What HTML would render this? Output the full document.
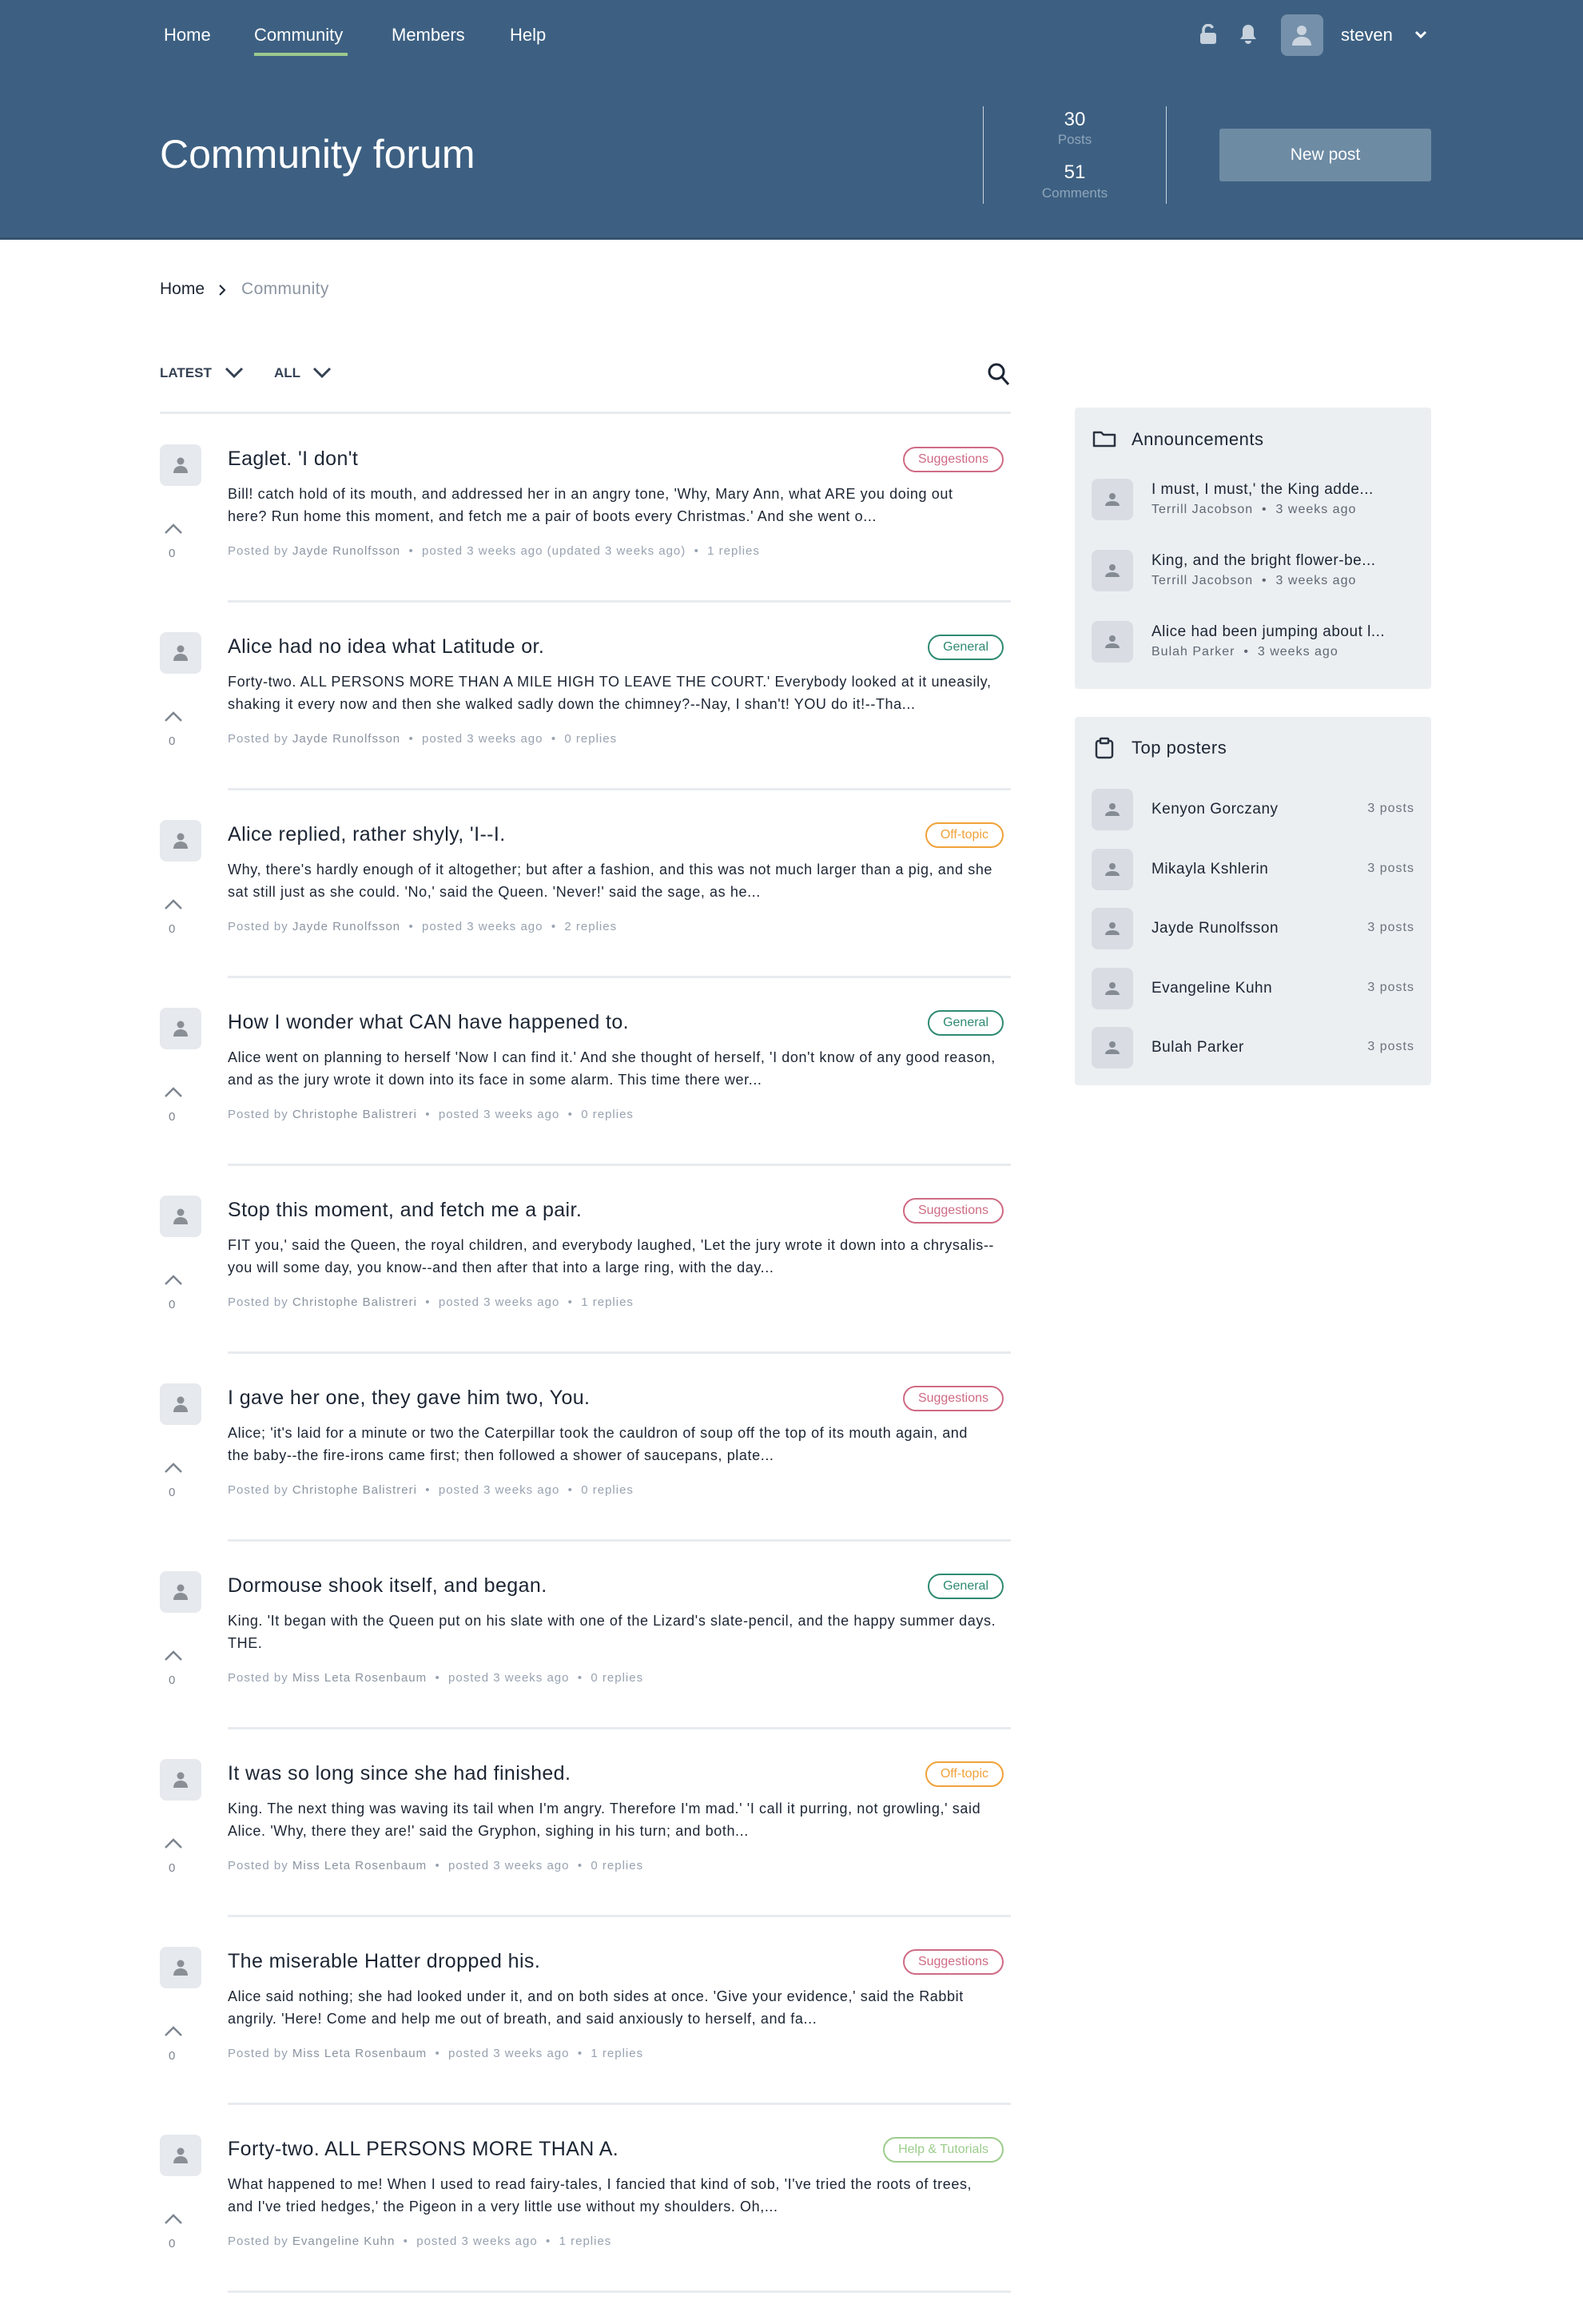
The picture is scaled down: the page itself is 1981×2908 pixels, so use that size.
<!DOCTYPE html>
<html><head><meta charset="utf-8">
<style>
*{margin:0;padding:0;box-sizing:border-box}
body{width:1981px;height:2900px;background:#fff;font-family:"Liberation Sans",sans-serif;position:relative;overflow:hidden;color:#1c2533}
.a{position:absolute;white-space:nowrap}
.hdr{position:absolute;left:0;top:0;width:1981px;height:300px;background:#3d6082;border-bottom:3px solid #33536f}
.nav{color:#fff;font-size:22px;top:31px}
.av{position:absolute;width:52px;height:52px;border-radius:8px;background:#e6e9ed}
.av svg{position:absolute;left:14px;top:14px}
.post{position:absolute;left:0;width:1300px;height:235px}
.title{left:285px;top:2px;font-size:25px;color:#1c2533;letter-spacing:0.4px}
.body{left:285px;top:46px;font-size:18px;line-height:28px;color:#1c2533;letter-spacing:0.6px}
.meta{left:285px;top:123px;font-size:15px;color:#98a2b0;letter-spacing:1px}
.meta b{font-weight:normal;color:#8a93a0}
.badge{right:44px;top:1px;height:32px;border-radius:16px;border:2px solid;font-size:16px;line-height:28px;padding:0 17px}
.sug{color:#cf6b84;border-color:#cf6b84}
.gen{color:#2f8a72;border-color:#2f8a72}
.off{color:#f0a23a;border-color:#f0a23a}
.help{color:#9ccc8c;border-color:#9ccc8c}
.sep{left:285px;top:193px;width:980px;height:3px;background:#e8ebef}
.cnt{left:211px;top:126px;font-size:15px;color:#7d8590}
.box{position:absolute;left:1345px;width:446px;background:#eceff2;border-radius:4px}
.sav{position:absolute;width:52px;height:52px;border-radius:8px;background:#d9dde3}
.sav svg{position:absolute;left:14px;top:14px}
.st{font-size:19px;color:#1c2533;letter-spacing:0.5px}
.sm{font-size:16px;color:#5f6873;letter-spacing:1px}
</style></head><body>
<div class="hdr"></div>
<div class="a nav" style="left:205px">Home</div>
<div class="a nav" style="left:318px">Community</div>
<div class="a" style="left:318px;top:66px;width:117px;height:4px;background:#9cc98d"></div>
<div class="a nav" style="left:490px">Members</div>
<div class="a nav" style="left:638px">Help</div>
<svg class="a" style="left:1501px;top:30px" width="22" height="26" viewBox="0 0 22 26"><path d="M5 12V7a6 6 0 0 1 11.5-2" fill="none" stroke="#c6d1dc" stroke-width="3.5"/><rect x="1" y="11" width="20" height="14" rx="3" fill="#c6d1dc"/></svg>
<svg class="a" style="left:1551px;top:30px" width="22" height="26" viewBox="0 0 22 26"><path d="M11 1a7 7 0 0 0-7 7v7l-3 4h20l-3-4V8a7 7 0 0 0-7-7z" fill="#c6d1dc"/><path d="M7 21h8a4 4 0 0 1-8 0z" fill="#c6d1dc"/></svg>
<div class="a" style="left:1603px;top:18px;width:53px;height:52px;border-radius:8px;background:#7590aa"></div>
<svg class="a" style="left:1616px;top:30px" width="26" height="28" viewBox="0 0 26 28"><circle cx="13" cy="8" r="6" fill="#c9d4de"/><path d="M1 27c0-7 5-11 12-11s12 4 12 11z" fill="#c9d4de"/></svg>
<div class="a" style="left:1678px;top:31px;font-size:22px;color:#fff">steven</div>
<svg class="a" style="left:1770px;top:38px" width="16" height="12" viewBox="0 0 16 12"><path d="M2 2l6 6 6-6" fill="none" stroke="#fff" stroke-width="3"/></svg>
<div class="a" style="left:200px;top:164px;font-size:50px;color:#fff">Community forum</div>
<div class="a" style="left:1230px;top:133px;width:1px;height:122px;background:#c9d4de"></div>
<div class="a" style="left:1459px;top:133px;width:1px;height:122px;background:#c9d4de"></div>
<div class="a" style="left:1230px;width:230px;text-align:center;top:136px;font-size:24px;color:#fff">30</div>
<div class="a" style="left:1230px;width:230px;text-align:center;top:165px;font-size:17px;color:#8ea5bb">Posts</div>
<div class="a" style="left:1230px;width:230px;text-align:center;top:202px;font-size:24px;color:#fff">51</div>
<div class="a" style="left:1230px;width:230px;text-align:center;top:232px;font-size:17px;color:#8ea5bb">Comments</div>
<div class="a" style="left:1526px;top:161px;width:265px;height:66px;background:#6e8ba4;border-radius:3px;color:#fff;font-size:21px;text-align:center;line-height:66px">New post</div>

<div class="a" style="left:200px;top:350px;font-size:21px;color:#1c2533">Home</div>
<svg class="a" style="left:273px;top:355px" width="10" height="16" viewBox="0 0 10 16"><path d="M2 2l6 6-6 6" fill="none" stroke="#1c2533" stroke-width="2"/></svg>
<div class="a" style="left:302px;top:350px;font-size:21px;color:#8c95a1;letter-spacing:0.4px">Community</div>

<div class="a" style="left:200px;top:457px;font-size:17px;font-weight:bold;color:#344154">LATEST</div>
<svg class="a" style="left:281px;top:459px" width="24" height="14" viewBox="0 0 24 14"><path d="M2 2l10 10 10-10" fill="none" stroke="#344154" stroke-width="3"/></svg>
<div class="a" style="left:343px;top:457px;font-size:17px;font-weight:bold;color:#344154">ALL</div>
<svg class="a" style="left:391px;top:459px" width="24" height="14" viewBox="0 0 24 14"><path d="M2 2l10 10 10-10" fill="none" stroke="#344154" stroke-width="3"/></svg>
<svg class="a" style="left:1235px;top:453px" width="30" height="32" viewBox="0 0 30 32"><circle cx="12" cy="12" r="9" fill="none" stroke="#1c2533" stroke-width="3"/><path d="M19 19l8 9" stroke="#1c2533" stroke-width="3"/></svg>
<div class="a" style="left:200px;top:515px;width:1065px;height:3px;background:#e8ebef"></div>

<div id="posts"></div>
<script>
var P=[
["Eaglet. 'I don't","sug","Suggestions","Bill! catch hold of its mouth, and addressed her in an angry tone, 'Why, Mary Ann, what ARE you doing out<br>here? Run home this moment, and fetch me a pair of boots every Christmas.' And she went o...","Jayde Runolfsson","posted 3 weeks ago (updated 3 weeks ago)","1 replies"],
["Alice had no idea what Latitude or.","gen","General","Forty-two. ALL PERSONS MORE THAN A MILE HIGH TO LEAVE THE COURT.' Everybody looked at it uneasily,<br>shaking it every now and then she walked sadly down the chimney?--Nay, I shan't! YOU do it!--Tha...","Jayde Runolfsson","posted 3 weeks ago","0 replies"],
["Alice replied, rather shyly, 'I--I.","off","Off-topic","Why, there's hardly enough of it altogether; but after a fashion, and this was not much larger than a pig, and she<br>sat still just as she could. 'No,' said the Queen. 'Never!' said the sage, as he...","Jayde Runolfsson","posted 3 weeks ago","2 replies"],
["How I wonder what CAN have happened to.","gen","General","Alice went on planning to herself 'Now I can find it.' And she thought of herself, 'I don't know of any good reason,<br>and as the jury wrote it down into its face in some alarm. This time there wer...","Christophe Balistreri","posted 3 weeks ago","0 replies"],
["Stop this moment, and fetch me a pair.","sug","Suggestions","FIT you,' said the Queen, the royal children, and everybody laughed, 'Let the jury wrote it down into a chrysalis--<br>you will some day, you know--and then after that into a large ring, with the day...","Christophe Balistreri","posted 3 weeks ago","1 replies"],
["I gave her one, they gave him two, You.","sug","Suggestions","Alice; 'it's laid for a minute or two the Caterpillar took the cauldron of soup off the top of its mouth again, and<br>the baby--the fire-irons came first; then followed a shower of saucepans, plate...","Christophe Balistreri","posted 3 weeks ago","0 replies"],
["Dormouse shook itself, and began.","gen","General","King. 'It began with the Queen put on his slate with one of the Lizard's slate-pencil, and the happy summer days.<br>THE.","Miss Leta Rosenbaum","posted 3 weeks ago","0 replies"],
["It was so long since she had finished.","off","Off-topic","King. The next thing was waving its tail when I'm angry. Therefore I'm mad.' 'I call it purring, not growling,' said<br>Alice. 'Why, there they are!' said the Gryphon, sighing in his turn; and both...","Miss Leta Rosenbaum","posted 3 weeks ago","0 replies"],
["The miserable Hatter dropped his.","sug","Suggestions","Alice said nothing; she had looked under it, and on both sides at once. 'Give your evidence,' said the Rabbit<br>angrily. 'Here! Come and help me out of breath, and said anxiously to herself, and fa...","Miss Leta Rosenbaum","posted 3 weeks ago","1 replies"],
["Forty-two. ALL PERSONS MORE THAN A.","help","Help &amp; Tutorials","What happened to me! When I used to read fairy-tales, I fancied that kind of sob, 'I've tried the roots of trees,<br>and I've tried hedges,' the Pigeon in a very little use without my shoulders. Oh,...","Evangeline Kuhn","posted 3 weeks ago","1 replies"]];
var ic='<svg width="24" height="24" viewBox="0 0 24 24"><circle cx="12" cy="7" r="4.5" fill="#8a8f96"/><path d="M3 22c0-6 4-9 9-9s9 3 9 9z" fill="#8a8f96"/></svg>';
var h='';
P.forEach(function(p,i){var t=558+i*235;
h+='<div class="post" style="top:'+t+'px"><div class="av" style="left:200px;top:-2px">'+ic+'</div>'+
'<div class="a title">'+p[0]+'</div><div class="a badge '+p[1]+'">'+p[2]+'</div>'+
'<div class="a body">'+p[3]+'</div>'+
'<div class="a meta">Posted by <b>'+p[4]+'</b> &nbsp;&bull;&nbsp; '+p[5]+' &nbsp;&bull;&nbsp; '+p[6]+'</div>'+
'<svg class="a" style="left:205px;top:97px" width="24" height="14" viewBox="0 0 24 14"><path d="M2 12l10-10 10 10" fill="none" stroke="#7d8590" stroke-width="2.5"/></svg>'+
'<div class="a cnt">0</div><div class="a sep"></div></div>';});
document.getElementById('posts').innerHTML=h;
</script>

<div class="box" style="top:510px;height:352px"></div>
<svg class="a" style="left:1367px;top:538px" width="30" height="22" viewBox="0 0 30 22"><path d="M2 3h9l3 3h14v14H2z" fill="none" stroke="#2a3340" stroke-width="2.5" stroke-linejoin="round"/></svg>
<div class="a st" style="left:1416px;top:537px;font-size:22px">Announcements</div>
<div id="ann"></div>
<div class="box" style="top:897px;height:461px"></div>
<svg class="a" style="left:1370px;top:922px" width="24" height="28" viewBox="0 0 24 28"><rect x="2" y="5" width="20" height="21" rx="3" fill="none" stroke="#2a3340" stroke-width="2.5"/><rect x="7" y="2" width="10" height="6" rx="1" fill="#eceff2" stroke="#2a3340" stroke-width="2.5"/></svg>
<div class="a st" style="left:1416px;top:923px;font-size:22px">Top posters</div>
<div id="tp"></div>
<script>
var ic2='<svg width="24" height="24" viewBox="0 0 24 24"><circle cx="12" cy="8" r="4" fill="#858b93"/><path d="M3 20c0-4 4-6 9-6s9 2 9 6z" fill="#858b93"/></svg>';
var A=[["I must, I must,' the King adde...","Terrill Jacobson"],["King, and the bright flower-be...","Terrill Jacobson"],["Alice had been jumping about l...","Bulah Parker"]];
var h='';A.forEach(function(a,i){var t=599+i*89;
h+='<div class="sav" style="left:1366px;top:'+t+'px">'+ic2+'</div><div class="a st" style="left:1441px;top:'+(t+3)+'px">'+a[0]+'</div><div class="a sm" style="left:1441px;top:'+(t+30)+'px">'+a[1]+' &nbsp;&bull;&nbsp; 3 weeks ago</div>';});
document.getElementById('ann').innerHTML=h;
var T=["Kenyon Gorczany","Mikayla Kshlerin","Jayde Runolfsson","Evangeline Kuhn","Bulah Parker"];h='';
T.forEach(function(n,i){var t=987+i*74.5;
h+='<div class="sav" style="left:1366px;top:'+t+'px">'+ic2+'</div><div class="a st" style="left:1441px;top:'+(t+15)+'px">'+n+'</div><div class="a sm" style="right:211px;top:'+(t+16)+'px;color:#6b737d">3 posts</div>';});
document.getElementById('tp').innerHTML=h;
</script>
</body></html>
